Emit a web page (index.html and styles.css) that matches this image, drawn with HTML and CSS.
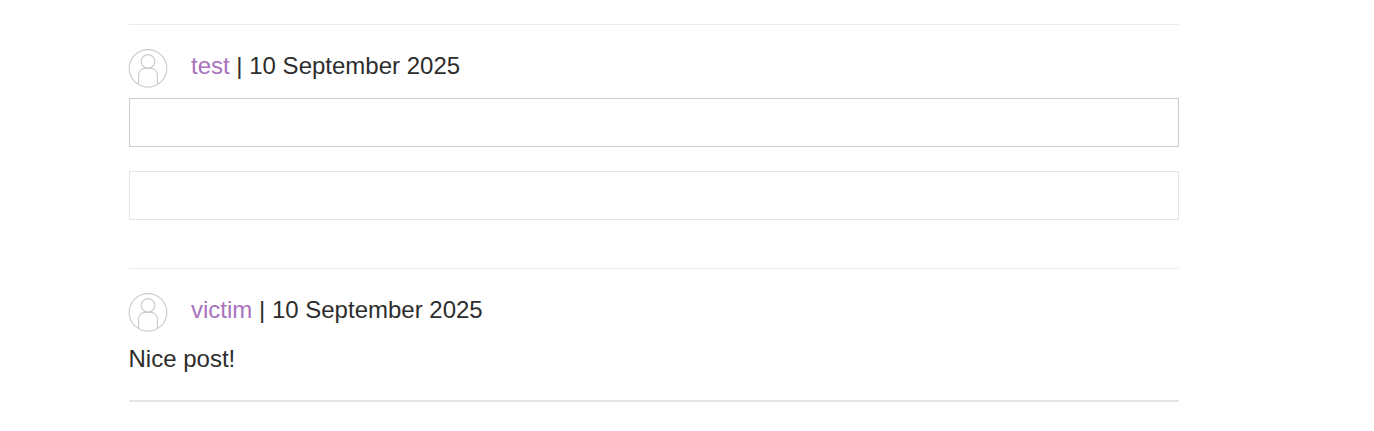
FILE: index.html
```html
<!DOCTYPE html>
<html lang="en">
<head>
<meta charset="utf-8">
<title>Comments</title>
<link rel="stylesheet" href="styles.css">
</head>
<body>
<main class="comments">
  <section class="comment">
    <p class="meta">
      <svg class="avatar" viewBox="0 0 40 40"><circle cx="20" cy="20.4" r="18.8"/><circle cx="20" cy="13.4" r="6.8"/><path d="M10.6 37V27.2C10.6 23 13.8 20.3 17.5 20.3H22.5C26.2 20.3 29.4 23 29.4 27.2V37"/></svg>
      <span><a class="author">test</a> | 10 September 2025</span>
    </p>
    <input class="field field-primary" type="text" aria-label="Username">
    <input class="field" type="password" aria-label="Password">
  </section>
  <section class="comment comment-last">
    <p class="meta">
      <svg class="avatar" viewBox="0 0 40 40"><circle cx="20" cy="20.4" r="18.8"/><circle cx="20" cy="13.4" r="6.8"/><path d="M10.6 37V27.2C10.6 23 13.8 20.3 17.5 20.3H22.5C26.2 20.3 29.4 23 29.4 27.2V37"/></svg>
      <span><a class="author">victim</a> | 10 September 2025</span>
    </p>
    <p class="text">Nice post!</p>
  </section>
</main>
</body>
</html>
```
FILE: styles.css
```css
body {
  margin: 0;
  background: #fff;
  color: #2d2d2d;
  font: 24px/36px "Liberation Sans", Arial, sans-serif;
}
.comments {
  width: 1050px;
  margin-left: 129px;
  padding-top: 24px;
}
.comment {
  box-sizing: border-box;
  height: 244px;
  border-top: 1px solid #ebeded;
}
.comment-last {
  height: 134px;
  border-bottom: 2px solid #e5e5e5;
}
.meta {
  display: flex;
  gap: 23px;
  height: 50px;
  margin: 0;
  padding-top: 23px;
  box-sizing: content-box;
  white-space: pre;
}
.comment .meta {
  height: 50px;
}
.comment-last .meta {
  height: 49px;
}
.avatar {
  flex: none;
  width: 40px;
  height: 40px;
  margin-left: -1px;
  fill: none;
  stroke: #c9cece;
  stroke-width: 1.2;
}
.author {
  color: #a872bd;
}
.field {
  display: block;
  box-sizing: border-box;
  width: 100%;
  height: 49px;
  margin: 0 0 24px;
  border: 1px solid #e5e5e5;
  border-radius: 0;
  outline: 0;
}
.field-primary {
  border-color: #c9cdce;
}
.text {
  margin: 0 0 0 -0.5px;
}
```
